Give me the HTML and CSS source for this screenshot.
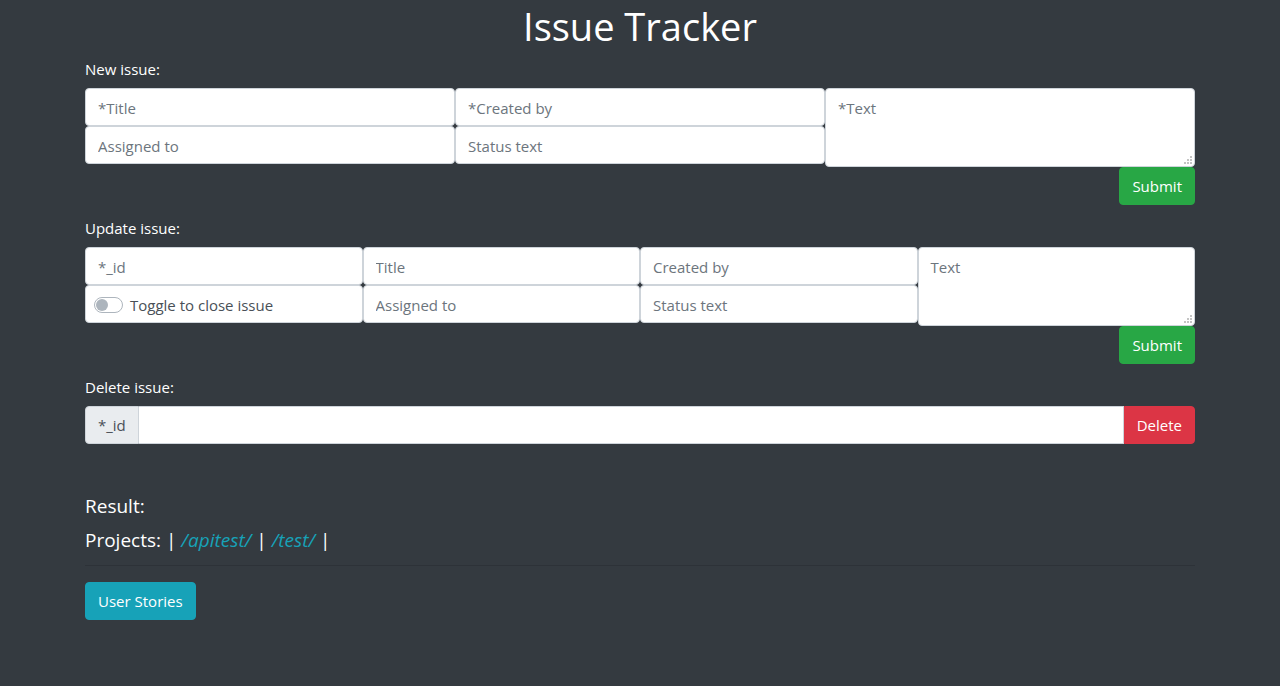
FILE: index.html
```html
<!DOCTYPE html>
<html lang="en">
<head>
<meta charset="utf-8">
<title>Issue Tracker</title>
<link rel="stylesheet" href="styles.css">
</head>
<body>
<div class="container">
  <h1 class="title">Issue Tracker</h1>

  <form class="issue-form">
    <label class="form-label">New issue:</label>
    <div class="field-row">
      <div class="field-col">
        <input class="form-control" type="text" placeholder="*Title">
        <input class="form-control" type="text" placeholder="Assigned to">
      </div>
      <div class="field-col">
        <input class="form-control" type="text" placeholder="*Created by">
        <input class="form-control" type="text" placeholder="Status text">
      </div>
      <div class="field-col area-wrap">
        <textarea class="form-control text-area" placeholder="*Text"></textarea>
        <svg class="grip" width="8" height="8" viewBox="0 0 8 8"><g fill="#c4c4c4"><rect x="6" y="0" width="2" height="2"/><rect x="3" y="3" width="2" height="2"/><rect x="6" y="3" width="2" height="2"/><rect x="0" y="6" width="2" height="2"/><rect x="3" y="6" width="2" height="2"/><rect x="6" y="6" width="2" height="2"/></g></svg>
      </div>
    </div>
    <div class="actions"><button type="button" class="btn btn-success">Submit</button></div>
  </form>

  <form class="issue-form">
    <label class="form-label">Update issue:</label>
    <div class="field-row">
      <div class="field-col">
        <input class="form-control" type="text" placeholder="*_id">
        <div class="form-control switch-box">
          <span class="switch"><span class="knob"></span></span>
          <span class="switch-label">Toggle to close issue</span>
        </div>
      </div>
      <div class="field-col">
        <input class="form-control" type="text" placeholder="Title">
        <input class="form-control" type="text" placeholder="Assigned to">
      </div>
      <div class="field-col">
        <input class="form-control" type="text" placeholder="Created by">
        <input class="form-control" type="text" placeholder="Status text">
      </div>
      <div class="field-col area-wrap">
        <textarea class="form-control text-area" placeholder="Text"></textarea>
        <svg class="grip" width="8" height="8" viewBox="0 0 8 8"><g fill="#c4c4c4"><rect x="6" y="0" width="2" height="2"/><rect x="3" y="3" width="2" height="2"/><rect x="6" y="3" width="2" height="2"/><rect x="0" y="6" width="2" height="2"/><rect x="3" y="6" width="2" height="2"/><rect x="6" y="6" width="2" height="2"/></g></svg>
      </div>
    </div>
    <div class="actions"><button type="button" class="btn btn-success">Submit</button></div>
  </form>

  <form class="issue-form">
    <label class="form-label">Delete issue:</label>
    <div class="input-group">
      <span class="addon">*_id</span>
      <input class="form-control grow" type="text">
      <button type="button" class="btn btn-danger">Delete</button>
    </div>
  </form>

  <div class="result">
    <p class="result-line">Result:</p>
    <p class="result-line">Projects: | <a class="project-link" href="#">/apitest/</a> | <a class="project-link" href="#">/test/</a> |</p>
  </div>
  <hr class="divider">
  <button type="button" class="btn btn-info">User Stories</button>
</div>
</body>
</html>
```
FILE: styles.css
```css
* { box-sizing: border-box; }
html, body { margin: 0; padding: 0; }
body {
  background: #343a40;
  color: #fff;
  font-family: "Open Sans", "Noto Sans", sans-serif;
  font-size: 16px;
  line-height: 1.5;
  height: 686px;
}
.container {
  max-width: 1140px;
  margin: 0 auto;
  padding: 3px 15px 0;
}
.title {
  margin: 0 0 7px;
  text-align: center;
  font-size: 38px;
  font-weight: 400;
  line-height: 47px;
}
.issue-form { margin: 0 0 11px; }
.form-label {
  display: block;
  font-size: 15px;
  line-height: 24px;
  margin-bottom: 7px;
}
.field-row {
  display: flex;
  align-items: flex-start;
}
.field-col {
  flex: 1 1 0;
  min-width: 0;
  display: flex;
  flex-direction: column;
}
.area-wrap { position: relative; }
.form-control {
  display: block;
  width: 100%;
  height: 38px;
  padding: 7px 12px 5px;
  font-family: inherit;
  font-size: 15px;
  line-height: 24px;
  color: #495057;
  background: #fff;
  border: 1px solid #ced4da;
  border-radius: 4px;
  outline: none;
}
.form-control::placeholder { color: #6c757d; opacity: 1; }
.text-area {
  height: 79px;
  resize: none;
}
.grip {
  position: absolute;
  right: 3px;
  bottom: 3px;
}
.switch-box {
  display: flex;
  align-items: center;
  padding-left: 8px;
}
.switch {
  position: relative;
  width: 29px;
  height: 16px;
  border: 1px solid #adb5bd;
  border-radius: 8px;
  background: #fff;
  margin-right: 7px;
  flex: none;
}
.knob {
  position: absolute;
  top: 1px;
  left: 1px;
  width: 12px;
  height: 12px;
  border-radius: 50%;
  background: #adb5bd;
}
.switch-label { color: #495057; }
.actions {
  display: flex;
  justify-content: flex-end;
}
.btn {
  display: inline-block;
  height: 38px;
  padding: 6px 12px;
  font-family: inherit;
  font-size: 15px;
  line-height: 24px;
  color: #fff;
  border: 1px solid transparent;
  border-radius: 4px;
  cursor: pointer;
}
.btn-success { background: #28a745; border-color: #28a745; }
.btn-danger { background: #dc3545; border-color: #dc3545; border-radius: 0 4px 4px 0; }
.btn-info { background: #17a2b8; border-color: #17a2b8; }
.input-group {
  display: flex;
  align-items: stretch;
}
.addon {
  display: flex;
  align-items: center;
  padding: 6px 12px;
  background: #e9ecef;
  color: #495057;
  border: 1px solid #ced4da;
  border-radius: 4px 0 0 4px;
  font-size: 15px;
}
.form-control.grow {
  flex: 1 1 auto;
  width: auto;
  border-radius: 0;
  border-left: 0;
}
.result { margin-top: 47px; }
.result-line {
  margin: 0 0 4px;
  font-size: 19px;
  line-height: 30px;
}
.project-link {
  color: #17a2b8;
  font-style: italic;
  text-decoration: none;
}
.divider {
  margin: 10px 0 16px;
  border: 0;
  border-top: 1px solid rgba(0, 0, 0, 0.12);
}
```
